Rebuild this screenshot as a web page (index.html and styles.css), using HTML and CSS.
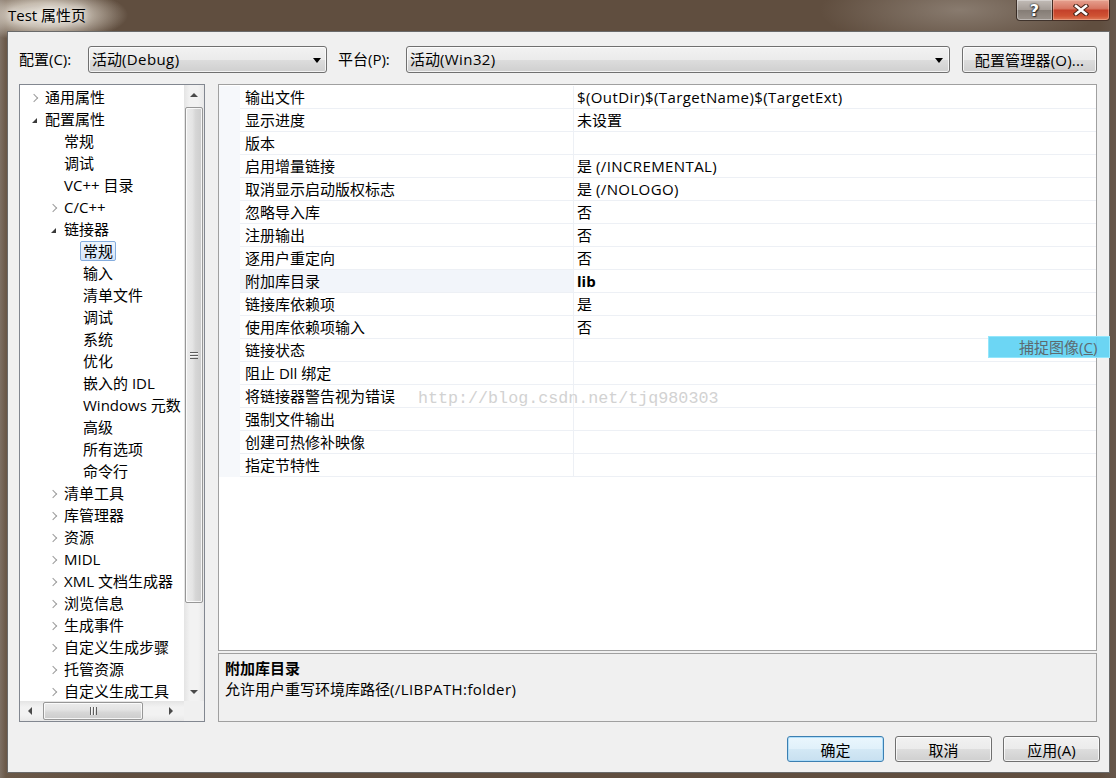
FILE: index.html
```html
<!DOCTYPE html>
<html lang="zh-CN">
<head>
<meta charset="utf-8">
<title>Test 属性页</title>
<link rel="stylesheet" href="styles.css">
</head>
<body>
<div class="window">
  <header class="titlebar">
    <div class="title">Test 属性页</div>
    <div class="caption-btns">
      <div class="cap help">?</div>
      <div class="cap close">
        <svg width="16" height="12" viewBox="0 0 16 12"><path d="M3 2 L13 10 M13 2 L3 10" stroke="#4a2418" stroke-width="4.6" stroke-linecap="square"/><path d="M3 2 L13 10 M13 2 L3 10" stroke="#ffffff" stroke-width="2.6" stroke-linecap="square"/></svg>
      </div>
    </div>
  </header>

  <div class="client">
    <div class="toolbar">
      <span class="lbl lbl-config">配置(C):</span>
      <div class="combo combo-config"><span>活动<b class="lat">(Debug)</b></span><i class="drop"></i></div>
      <span class="lbl lbl-platform">平台(P):</span>
      <div class="combo combo-platform"><span>活动<b class="lat">(Win32)</b></span><i class="drop"></i></div>
      <div class="btn btn-manager">配置管理器(O)...</div>
    </div>

    <div class="main">
      <div class="tree">
        <div class="tree-list">
          <div class="ti l0"><span class="exp c"></span><span class="tx">通用属性</span></div>
          <div class="ti l0"><span class="exp o"></span><span class="tx">配置属性</span></div>
          <div class="ti l1"><span class="exp"></span><span class="tx">常规</span></div>
          <div class="ti l1"><span class="exp"></span><span class="tx">调试</span></div>
          <div class="ti l1"><span class="exp"></span><span class="tx">VC++ 目录</span></div>
          <div class="ti l1"><span class="exp c"></span><span class="tx">C/C++</span></div>
          <div class="ti l1"><span class="exp o"></span><span class="tx">链接器</span></div>
          <div class="ti l2"><span class="exp"></span><span class="tx sel">常规</span></div>
          <div class="ti l2"><span class="exp"></span><span class="tx">输入</span></div>
          <div class="ti l2"><span class="exp"></span><span class="tx">清单文件</span></div>
          <div class="ti l2"><span class="exp"></span><span class="tx">调试</span></div>
          <div class="ti l2"><span class="exp"></span><span class="tx">系统</span></div>
          <div class="ti l2"><span class="exp"></span><span class="tx">优化</span></div>
          <div class="ti l2"><span class="exp"></span><span class="tx">嵌入的 IDL</span></div>
          <div class="ti l2"><span class="exp"></span><span class="tx">Windows 元数</span></div>
          <div class="ti l2"><span class="exp"></span><span class="tx">高级</span></div>
          <div class="ti l2"><span class="exp"></span><span class="tx">所有选项</span></div>
          <div class="ti l2"><span class="exp"></span><span class="tx">命令行</span></div>
          <div class="ti l1"><span class="exp c"></span><span class="tx">清单工具</span></div>
          <div class="ti l1"><span class="exp c"></span><span class="tx">库管理器</span></div>
          <div class="ti l1"><span class="exp c"></span><span class="tx">资源</span></div>
          <div class="ti l1"><span class="exp c"></span><span class="tx">MIDL</span></div>
          <div class="ti l1"><span class="exp c"></span><span class="tx">XML 文档生成器</span></div>
          <div class="ti l1"><span class="exp c"></span><span class="tx">浏览信息</span></div>
          <div class="ti l1"><span class="exp c"></span><span class="tx">生成事件</span></div>
          <div class="ti l1"><span class="exp c"></span><span class="tx">自定义生成步骤</span></div>
          <div class="ti l1"><span class="exp c"></span><span class="tx">托管资源</span></div>
          <div class="ti l1"><span class="exp c"></span><span class="tx">自定义生成工具</span></div>
        </div>
        <div class="vscroll">
          <div class="sb-btn"><i class="ar-up"></i></div>
          <div class="vthumb"><i class="vgrip"></i></div>
          <div class="sb-fill"></div>
          <div class="sb-btn"><i class="ar-down"></i></div>
        </div>
        <div class="hscroll">
          <div class="sb-hbtn"><i class="ar-left"></i></div>
          <div class="hthumb"><i class="hgrip"></i></div>
          <div class="sb-fill"></div>
          <div class="sb-hbtn"><i class="ar-right"></i></div>
        </div>
        <div class="corner"></div>
      </div>

      <div class="right">
        <div class="grid">
          <div class="row"><div class="gut"></div><div class="name">输出文件</div><div class="val lat">$(OutDir)$(TargetName)$(TargetExt)</div></div>
          <div class="row"><div class="gut"></div><div class="name">显示进度</div><div class="val">未设置</div></div>
          <div class="row"><div class="gut"></div><div class="name">版本</div><div class="val"></div></div>
          <div class="row"><div class="gut"></div><div class="name">启用增量链接</div><div class="val">是 <b class="lat">(/INCREMENTAL)</b></div></div>
          <div class="row"><div class="gut"></div><div class="name">取消显示启动版权标志</div><div class="val">是 <b class="lat">(/NOLOGO)</b></div></div>
          <div class="row"><div class="gut"></div><div class="name">忽略导入库</div><div class="val">否</div></div>
          <div class="row"><div class="gut"></div><div class="name">注册输出</div><div class="val">否</div></div>
          <div class="row"><div class="gut"></div><div class="name">逐用户重定向</div><div class="val">否</div></div>
          <div class="row selected"><div class="gut"></div><div class="name">附加库目录</div><div class="val bold">lib</div></div>
          <div class="row"><div class="gut"></div><div class="name">链接库依赖项</div><div class="val">是</div></div>
          <div class="row"><div class="gut"></div><div class="name">使用库依赖项输入</div><div class="val">否</div></div>
          <div class="row"><div class="gut"></div><div class="name">链接状态</div><div class="val"></div></div>
          <div class="row"><div class="gut"></div><div class="name">阻止 Dll 绑定</div><div class="val"></div></div>
          <div class="row"><div class="gut"></div><div class="name">将链接器警告视为错误</div><div class="val"></div></div>
          <div class="row"><div class="gut"></div><div class="name">强制文件输出</div><div class="val"></div></div>
          <div class="row"><div class="gut"></div><div class="name">创建可热修补映像</div><div class="val"></div></div>
          <div class="row"><div class="gut"></div><div class="name">指定节特性</div><div class="val"></div></div>
        </div>
        <div class="desc">
          <div class="desc-title">附加库目录</div>
          <div class="desc-text">允许用户重写环境库路径<b class="lat">(/LIBPATH:folder)</b></div>
        </div>
      </div>
    </div>

    <div class="footer">
      <div class="btn btn-foot default">确定</div>
      <div class="btn btn-foot">取消</div>
      <div class="btn btn-foot">应用(A)</div>
    </div>
  </div>

  <div class="watermark">http://blog.csdn.net/tjq980303</div>
  <div class="capture">捕捉图像(<u>C</u>)</div>
</div>
</body>
</html>
```

FILE: styles.css
```css
* { box-sizing: border-box; }
html, body { margin: 0; padding: 0; }
body {
  width: 1116px;
  height: 778px;
  overflow: hidden;
  font-family: "Open Sans", "Noto Sans CJK SC", sans-serif;
  font-size: 15px;
  color: #000;
}

.lat { font-weight: inherit; letter-spacing: 0.4px; }
b.lat { font-weight: normal; }

.window {
  position: relative;
  width: 1116px;
  height: 778px;
  display: flex;
  flex-direction: column;
  background:
    radial-gradient(ellipse 82px 27px at 46px 15px, rgba(238,234,226,0.97) 0%, rgba(222,214,202,0.8) 45%, rgba(150,135,120,0) 100%),
    radial-gradient(ellipse 140px 40px at 960px 10px, rgba(170,160,150,0.55), rgba(170,160,150,0) 100%),
    linear-gradient(to right, #7d6f63 0px, #6a5848 6px, #604e3f 120px, #604e3f 1100px, #66564a 1116px);
}

/* title bar */
.titlebar {
  height: 31px;
  display: flex;
  align-items: flex-start;
  flex: none;
}
.title {
  padding: 5px 0 0 8px;
  line-height: 20px;
  font-size: 15px;
  color: #000;
  text-shadow: 0 0 6px rgba(255,255,255,0.9), 0 0 12px rgba(255,255,255,0.7);
}
.caption-btns {
  margin-left: auto;
  margin-right: 6px;
  display: flex;
  height: 21px;
}
.cap {
  height: 21px;
  border: 1px solid rgba(40,28,20,0.85);
  border-top: none;
  display: flex;
  align-items: center;
  justify-content: center;
}
.help {
  width: 36px;
  border-radius: 0 0 0 4px;
  border-right: none;
  background: linear-gradient(#c2bcb7 0%, #a59d97 48%, #857d76 52%, #9a928b 100%);
  box-shadow: inset 0 0 0 1px rgba(255,255,255,0.35);
  color: #fff;
  font-family: "DejaVu Sans", sans-serif;
  font-weight: bold;
  font-size: 16px;
  line-height: 19px;
  text-shadow: 0 0 1px #222, 0 0 2px #222, 1px 1px 1px #333;
}
.close {
  width: 58px;
  border-radius: 0 0 4px 0;
  background: linear-gradient(#e6a190 0%, #d77763 42%, #c4412a 52%, #cf5233 80%, #de7a58 100%);
  box-shadow: inset 0 0 0 1px rgba(255,220,200,0.35);
}

/* client */
.client {
  flex: 1;
  margin: 0 6px 5px 7px;
  border: 1px solid #6a6a6a;
  background: #f0f0f0;
  padding: 14px 12px 10px 11px;
  display: flex;
  flex-direction: column;
}

.toolbar {
  height: 27px;
  display: flex;
  align-items: center;
  flex: none;
}
.lbl { line-height: 27px; white-space: nowrap; }
.lbl-config { width: 69px; }
.lbl-platform { width: 68px; margin-left: 11px; }

.combo, .btn {
  height: 27px;
  border: 1px solid #707070;
  border-radius: 3px;
  background: linear-gradient(#f2f2f2 0%, #ebebeb 50%, #dddddd 51%, #cfcfcf 100%);
  box-shadow: inset 0 0 0 1px rgba(255,255,255,0.75);
}
.combo {
  display: flex;
  align-items: center;
  padding-left: 3px;
}
.combo span { flex: 1; line-height: 25px; white-space: nowrap; }
.combo-config { width: 239px; padding-right: 5px; }
.combo-platform { width: 544px; padding-right: 6px; }
.drop {
  width: 0; height: 0;
  border-left: 4px solid transparent;
  border-right: 4px solid transparent;
  border-top: 5px solid #000;
  margin-top: 1px;
}
.btn {
  display: flex;
  align-items: center;
  justify-content: center;
  white-space: nowrap;
}
.btn-manager { width: 135px; margin-left: 12px; letter-spacing: 0.2px; }

/* main */
.main {
  margin-top: 11px;
  height: 638px;
  display: flex;
  gap: 13px;
  flex: none;
}

.tree {
  width: 186px;
  flex: none;
  border: 1px solid #828790;
  background: #fff;
  display: grid;
  grid-template-columns: 164px 20px;
  grid-template-rows: 616px 20px;
}
.tree-list {
  overflow: hidden;
  padding-top: 1px;
}
.ti {
  height: 22px;
  display: flex;
  align-items: center;
  white-space: nowrap;
}
.l0 { padding-left: 10px; }
.l1 { padding-left: 29px; }
.l2 { padding-left: 48px; }
.exp {
  width: 15px;
  height: 22px;
  flex: none;
  position: relative;
}
.exp.c::before {
  content: "";
  position: absolute;
  left: 1px;
  top: 9px;
  width: 5px;
  height: 5px;
  border-right: 1px solid #9c9c9c;
  border-bottom: 1px solid #9c9c9c;
  transform: rotate(-45deg);
}
.exp.o::before {
  content: "";
  position: absolute;
  left: 2px;
  top: 10px;
  width: 0;
  height: 0;
  border-left: 5px solid transparent;
  border-bottom: 5px solid #3a3a3a;
}
.tx { line-height: 22px; }
.tx.sel {
  margin-left: -3px;
  height: 20px;
  line-height: 18px;
  padding: 0 2px;
  border: 1px solid #84acdd;
  border-radius: 2px;
  background: linear-gradient(#eef5fd, #d5e6fb);
}

/* scrollbars */
.vscroll {
  display: flex;
  flex-direction: column;
  background: linear-gradient(to right, #e4e4e4, #f2f2f2 30%, #f2f2f2 70%, #e8e8e8);
}
.sb-btn {
  height: 19px;
  flex: none;
  display: flex;
  align-items: center;
  justify-content: center;
}
.sb-fill { flex: 1; }
.ar-up {
  width: 0; height: 0;
  border-left: 4px solid transparent;
  border-right: 4px solid transparent;
  border-bottom: 4px solid #4a4a4a;
}
.ar-down {
  width: 0; height: 0;
  border-left: 4px solid transparent;
  border-right: 4px solid transparent;
  border-top: 4px solid #4a4a4a;
}
.vthumb {
  margin: 3px 1px 0 1px;
  height: 496px;
  border: 1px solid #979797;
  border-radius: 2px;
  background: linear-gradient(to right, #ececec 0%, #e4e4e4 40%, #d6d6d6 60%, #cccccc 100%);
  box-shadow: inset 0 0 0 1px rgba(255,255,255,0.8);
  display: flex;
  align-items: center;
  justify-content: center;
}
.vgrip {
  width: 8px;
  height: 7px;
  background: repeating-linear-gradient(#5e5e5e 0 1px, #f6f6f6 1px 2px, transparent 2px 3px);
}
.hscroll {
  display: flex;
  align-items: stretch;
  background: linear-gradient(#e4e4e4, #f2f2f2 30%, #f2f2f2 70%, #e8e8e8);
}
.sb-hbtn {
  width: 20px;
  flex: none;
  display: flex;
  align-items: center;
  justify-content: center;
}
.ar-left {
  width: 0; height: 0;
  border-top: 4px solid transparent;
  border-bottom: 4px solid transparent;
  border-right: 4px solid #4a4a4a;
}
.ar-right {
  width: 0; height: 0;
  border-top: 4px solid transparent;
  border-bottom: 4px solid transparent;
  border-left: 4px solid #4a4a4a;
  margin-right: 6px;
}
.hthumb {
  margin: 1px 0 1px 3px;
  width: 100px;
  border: 1px solid #979797;
  border-radius: 2px;
  background: linear-gradient(#ececec 0%, #e4e4e4 40%, #d6d6d6 60%, #cccccc 100%);
  box-shadow: inset 0 0 0 1px rgba(255,255,255,0.8);
  display: flex;
  align-items: center;
  justify-content: center;
}
.hgrip {
  width: 7px;
  height: 8px;
  background: repeating-linear-gradient(to right, #5e5e5e 0 1px, #f6f6f6 1px 2px, transparent 2px 3px);
}
.corner { background: #f0f0f0; }

/* right side */
.right {
  flex: 1;
  display: flex;
  flex-direction: column;
  gap: 2px;
}
.grid {
  height: 567px;
  flex: none;
  border: 1px solid #a0a0a0;
  background: #fff;
  padding-top: 1px;
}
.row {
  display: grid;
  grid-template-columns: 21px 334px 1fr;
  height: 23px;
}
.gut { background: #f6f8fb; }
.name, .val {
  line-height: 22px;
  border-bottom: 1px solid #edf0f5;
  white-space: nowrap;
  overflow: hidden;
}
.name {
  padding-left: 5px;
  border-right: 1px solid #edf0f5;
}
.val { padding-left: 3px; }
.val.bold { font-weight: bold; }
.row.selected .name { background: #f2f5fa; }

.desc {
  flex: 1;
  border: 1px solid #a0a0a0;
  background: #f0f0f0;
  padding: 4px 6px 0 6px;
}
.desc-title { font-weight: bold; line-height: 21px; }
.desc-text { line-height: 21px; }

/* footer */
.footer {
  margin-top: 14px;
  margin-right: -3px;
  height: 26px;
  display: flex;
  justify-content: flex-end;
  gap: 11px;
  flex: none;
}
.btn-foot { width: 97px; height: 26px; }
.btn-foot.default {
  border-color: #3c7fb1;
  box-shadow: inset 0 0 0 1px rgba(170,220,250,0.9);
  background: linear-gradient(#eaf6fd 0%, #e0f0fa 50%, #d3e8f5 51%, #c8e0f0 100%);
}

/* overlays */
.watermark {
  position: absolute;
  left: 418px;
  top: 389px;
  font-family: "Liberation Mono", monospace;
  font-size: 16.7px;
  line-height: 20px;
  color: #d2d2d2;
  white-space: nowrap;
  pointer-events: none;
}
.capture {
  position: absolute;
  left: 988px;
  top: 336px;
  width: 122px;
  height: 22px;
  border: 1px solid #93e6fb;
  background: rgba(96, 211, 243, 0.92);
  color: #5c6a70;
  line-height: 20px;
  padding-left: 30px;
  white-space: nowrap;
}
.capture u { text-decoration: underline; }
```
